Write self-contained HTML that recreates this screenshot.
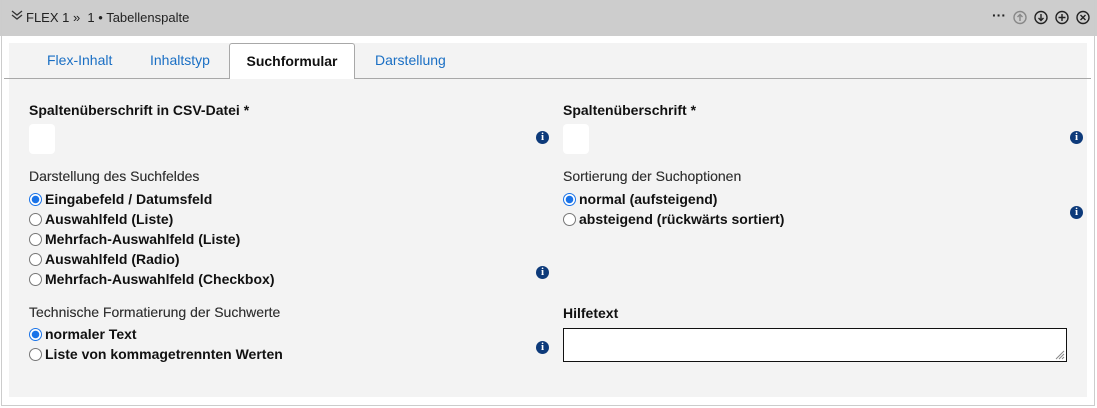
<!DOCTYPE html>
<html><head><meta charset="utf-8"><style>
*{box-sizing:border-box;margin:0;padding:0}
body{width:1097px;height:408px;background:#fff;font-family:"Liberation Sans",Arial,sans-serif;font-size:13px;color:#111;position:relative;overflow:hidden}
.a{position:absolute}
.outer{left:1px;top:0;width:1094px;height:406px;border:1px solid #ccc;border-top:none}
.hdr{left:0;top:0;width:1097px;height:36px;background:#cdcdcd}
.panel{left:9px;top:43px;width:1078px;height:354px;background:#f3f3f3}
.tabline{left:4px;top:78px;width:1087px;height:1px;background:#a8a8a8}
.tab{top:52px;font-size:14px;color:#1a6fc4}
.act{left:229px;top:43px;width:126px;height:36px;background:#fff;border:1px solid #a8a8a8;border-bottom:none;border-radius:3px 3px 0 0;text-align:center;line-height:34px;font-weight:bold;font-size:14px;color:#111}
.lbl{font-weight:bold;font-size:14px}
.sub{font-size:14px;color:#333;text-shadow:0 0 0.3px #333}
.r{font-weight:bold;font-size:14px;display:flex;align-items:center;height:20px}
.rad{width:13px;height:13px;border:1px solid #777;border-radius:50%;background:#fff;margin-right:3px;display:inline-block;flex:none}
.on{border:1px solid #1a73e8;background:radial-gradient(circle,#1a73e8 0 3.5px,#fff 4px)}
.inp{width:26px;height:30px;background:#fff;border-radius:4px}
.info{width:13px;height:13px;border-radius:50%;background:#0d3a7a;color:#fff;font:bold 11px "Liberation Serif",serif;text-align:center;line-height:13px}
</style></head><body>
<div class="a hdr"></div>
<div class="a outer"></div>
<svg class="a" style="left:11px;top:9px" width="12" height="12" viewBox="0 0 12 12"><path d="M1 2l5 4 5-4M1 6l5 4 5-4" fill="none" stroke="#333" stroke-width="1.3"/></svg>
<div class="a" style="left:26px;top:10px;font-size:13px;color:#222">FLEX 1 »&nbsp; 1 • Tabellenspalte</div>
<div class="a" style="left:992px;top:7px;font-size:14px;font-weight:bold;color:#222">···</div>
<svg class="a" style="left:1013px;top:10px" width="80" height="15" viewBox="0 0 80 15">
<g fill="none" stroke-width="1.4">
<circle cx="7" cy="7.5" r="6" stroke="#888"/><path d="M7 11V4.5M4.5 7L7 4.5 9.5 7" stroke="#888"/>
<circle cx="28" cy="7.5" r="6" stroke="#222"/><path d="M28 4v6.5M25.5 8L28 10.5 30.5 8" stroke="#222"/>
<circle cx="49" cy="7.5" r="6" stroke="#222"/><path d="M49 4v7M45.5 7.5h7" stroke="#222"/>
<circle cx="70" cy="7.5" r="6" stroke="#222"/><path d="M67.5 5l5 5M72.5 5l-5 5" stroke="#222"/>
</g></svg>
<div class="a panel"></div>
<div class="a tabline"></div>
<div class="a tab" style="left:47px">Flex-Inhalt</div>
<div class="a tab" style="left:150px">Inhaltstyp</div>
<div class="a act">Suchformular</div>
<div class="a tab" style="left:375px">Darstellung</div>

<div class="a lbl" style="left:29px;top:102px">Spaltenüberschrift in CSV-Datei *</div>
<div class="a inp" style="left:29px;top:124px"></div>
<div class="a info" style="left:536px;top:131px">i</div>
<div class="a sub" style="left:29px;top:168px">Darstellung des Suchfeldes</div>
<div class="a" style="left:29px;top:189px">
<div class="r"><span class="rad on"></span>Eingabefeld / Datumsfeld</div>
<div class="r"><span class="rad"></span>Auswahlfeld (Liste)</div>
<div class="r"><span class="rad"></span>Mehrfach-Auswahlfeld (Liste)</div>
<div class="r"><span class="rad"></span>Auswahlfeld (Radio)</div>
<div class="r"><span class="rad"></span>Mehrfach-Auswahlfeld (Checkbox)</div>
</div>
<div class="a info" style="left:536px;top:266px">i</div>
<div class="a sub" style="left:29px;top:304px">Technische Formatierung der Suchwerte</div>
<div class="a" style="left:29px;top:324px">
<div class="r"><span class="rad on"></span>normaler Text</div>
<div class="r"><span class="rad"></span>Liste von kommagetrennten Werten</div>
</div>
<div class="a info" style="left:536px;top:341px">i</div>

<div class="a lbl" style="left:563px;top:102px">Spaltenüberschrift *</div>
<div class="a inp" style="left:563px;top:124px"></div>
<div class="a info" style="left:1070px;top:131px">i</div>
<div class="a sub" style="left:563px;top:168px">Sortierung der Suchoptionen</div>
<div class="a" style="left:563px;top:189px">
<div class="r"><span class="rad on"></span>normal (aufsteigend)</div>
<div class="r"><span class="rad"></span>absteigend (rückwärts sortiert)</div>
</div>
<div class="a info" style="left:1070px;top:206px">i</div>
<div class="a lbl" style="left:563px;top:305px">Hilfetext</div>
<div class="a" style="left:563px;top:328px;width:504px;height:34px;background:#fff;border:1px solid #111"></div>
<svg class="a" style="left:1053px;top:348px" width="12" height="12"><path d="M11 3L3 11M11 6L6 11M11 9L9 11" stroke="#888"/></svg>
</body></html>
